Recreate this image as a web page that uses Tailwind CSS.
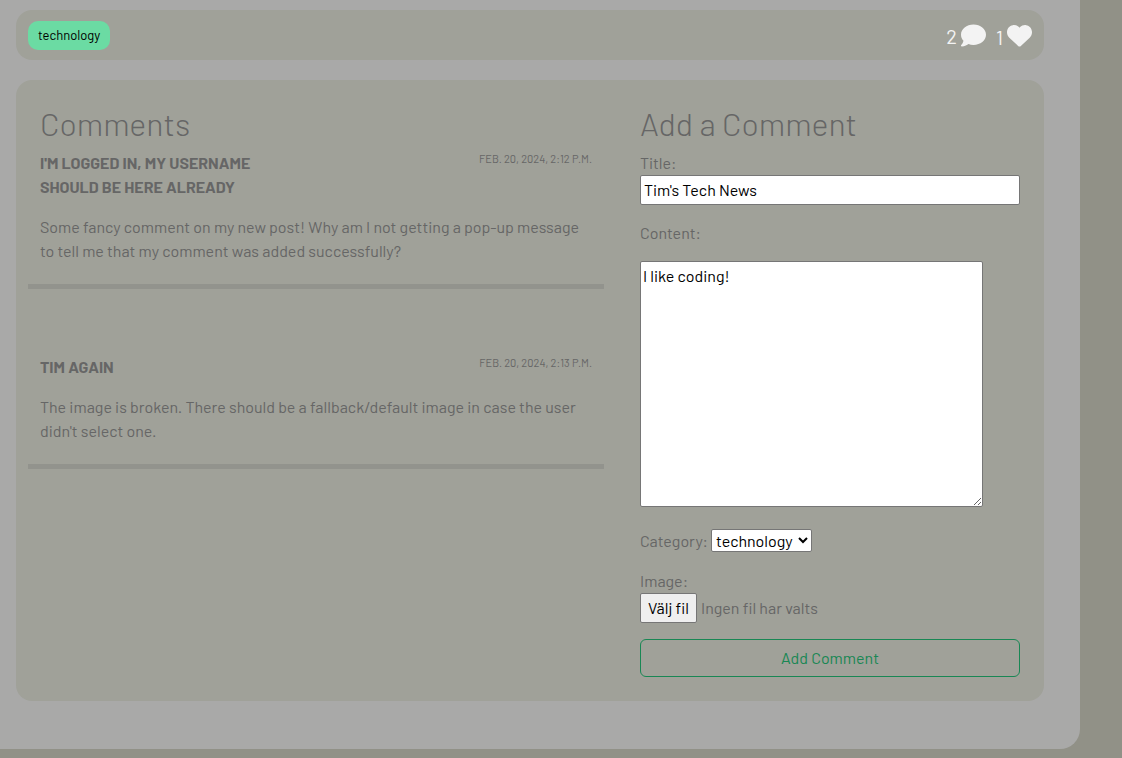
<!DOCTYPE html>
<html lang="en">
<head>
<meta charset="utf-8">
<meta name="viewport" content="width=device-width, initial-scale=1">
<title>Comments</title>
<script src="https://cdn.jsdelivr.net/npm/@tailwindcss/browser@4"></script>
</head>
<body class="min-h-screen bg-[#919187] font-['Barlow','Roboto',sans-serif] text-base text-[#666666]">
<main class="mr-[42px] flex flex-col gap-5 rounded-br-[20px] bg-[#a9a9a8] pt-2.5 pr-9 pb-12 pl-4">
  <section class="flex h-[50px] items-center justify-between rounded-2xl bg-[#a0a199] px-3">
    <a href="#" class="rounded-[10px] bg-[#6bdba3] px-2.5 py-1 text-[13px] leading-[21px] text-black">technology</a>
    <div class="flex items-center gap-2.5 text-xl text-[#f3f3f3]">
      <span class="flex items-center gap-1"><span class="pt-0.5">2</span>
        <svg class="h-[25px] w-[25px]" viewBox="0 0 512 512" fill="currentColor" aria-label="comments"><path d="M512 240c0 114.900-114.600 208-256 208c-37.100 0-72.300-6.400-104.100-17.900c-11.900 8.700-31.300 20.600-54.300 30.600C73.600 471.100 44.700 480 16 480c-6.500 0-12.300-3.900-14.800-9.900s-1.100-12.800 3.400-17.400c12-12.600 22.100-27.900 30.200-43.500c7.800-15.100 13.400-30 15.500-44.500C18.500 330.200 0 287 0 240C0 125.100 114.600 32 256 32s256 93.100 256 208z"/></svg>
      </span>
      <span class="flex items-center gap-1"><span class="pt-1">1</span>
        <svg class="h-[25px] w-[25px]" viewBox="0 0 512 512" fill="currentColor" aria-label="likes"><path d="M47.600 300.400L228.300 469.100c7.500 7 17.400 10.900 27.700 10.900s20.200-3.900 27.700-10.900L464.400 300.400c30.400-28.300 47.600-68 47.600-109.500v-5.800c0-69.900-50.500-129.500-119.400-141C347 36.500 300.600 51.400 268 84L256 96 244 84c-32.600-32.600-79-47.500-124.600-39.900C50.500 55.600 0 115.200 0 185.100v5.800c0 41.500 17.200 81.200 47.600 109.500z"/></svg>
      </span>
    </div>
  </section>

  <section class="grid grid-cols-[576fr_380fr] gap-9 rounded-2xl bg-[#a0a199] py-6 pr-6 pl-3">
    <div>
      <h2 class="mb-2 px-3 text-[32px] leading-[39px] font-light">Comments</h2>
      <article class="mb-[66px] border-b-[5px] border-[#92938d] px-3 pb-[21px]">
        <div class="flex justify-between">
          <h3 class="w-1/2 pr-6 font-bold uppercase">I'm logged in, my username should be here already</h3>
          <time class="text-[11px] leading-4 uppercase">Feb. 20, 2024, 2:12 p.m.</time>
        </div>
        <p class="mt-4">Some fancy comment on my new post! Why am I not getting a pop-up message to tell me that my comment was added successfully?</p>
      </article>
      <article class="border-b-[5px] border-[#92938d] px-3 pb-[21px]">
        <div class="flex justify-between">
          <h3 class="w-1/2 pr-6 font-bold uppercase">Tim again</h3>
          <time class="text-[11px] leading-4 uppercase">Feb. 20, 2024, 2:13 p.m.</time>
        </div>
        <p class="mt-4">The image is broken. There should be a fallback/default image in case the user didn't select one.</p>
      </article>
    </div>

    <form>
      <h2 class="mb-2 text-[32px] leading-[39px] font-light">Add a Comment</h2>
      <label for="title" class="block">Title:</label>
      <input id="title" type="text" value="Tim's Tech News" class="mb-4 block h-[30px] w-full rounded-[2px] border border-[#767676] bg-white px-[3px] pb-0.5 text-black">
      <label for="content" class="mb-4 block">Content:</label>
      <textarea id="content" cols="40" rows="10" class="mb-[22px] block h-[246px] w-[343px] max-w-full resize rounded-[2px] border border-[#767676] bg-white p-0.5 text-black">I like coding!</textarea>
      <div class="mb-[17px] flex items-center gap-[3px]">
        <label for="category" class="leading-[23px]">Category:</label>
        <select id="category" class="h-[23px] w-[101px] rounded-[2px] border border-[#767676] bg-white text-black"><option>technology</option></select>
      </div>
      <span class="block">Image:</span>
      <div class="mb-4 flex items-center gap-1">
        <input id="image" type="file" class="sr-only">
        <label for="image" class="flex h-[30px] w-[57px] items-center justify-center rounded-[2px] border border-[#767676] bg-[#efefef] whitespace-nowrap text-black">Välj fil</label>
        <span>Ingen fil har valts</span>
      </div>
      <button type="submit" class="h-[38px] w-full rounded-md border border-[#198754] text-[#198754]">Add Comment</button>
    </form>
  </section>
</main>
</body>
</html>
